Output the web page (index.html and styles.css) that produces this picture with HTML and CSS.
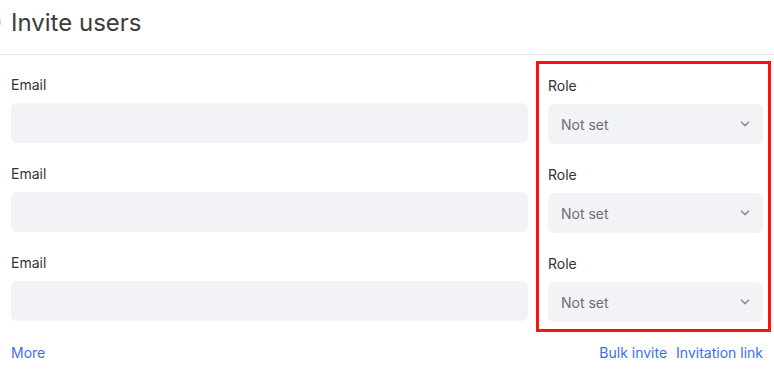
FILE: index.html
```html
<!DOCTYPE html>
<html lang="en">
<head>
    <meta charset="UTF-8">
    <meta name="viewport" content="width=device-width, initial-scale=1.0">
    <title>Invite users</title>
    <link rel="stylesheet" href="styles.css">
</head>
<body>
    <div class="header">
        <svg class="back-icon" width="16" height="16" viewBox="0 0 16 16">
            <circle cx="8" cy="8" r="6.5" fill="none" stroke="#d6d7dc" stroke-width="1.5"/>
        </svg>
        <h1>Invite users</h1>
    </div>
    <div class="invite-form">
        <div class="invite-row">
            <div class="field">
                <label>Email</label>
                <input type="text" class="text-input">
            </div>
            <div class="field role-field">
                <label>Role</label>
                <div class="select">
                    <span>Not set</span>
                    <svg width="10" height="6" viewBox="0 0 10 6"><path d="M1.5 1.2 L5 4.6 L8.5 1.2" fill="none" stroke="#8c909c" stroke-width="1.6" stroke-linecap="round" stroke-linejoin="round"/></svg>
                </div>
            </div>
        </div>
        <div class="invite-row">
            <div class="field">
                <label>Email</label>
                <input type="text" class="text-input">
            </div>
            <div class="field role-field">
                <label>Role</label>
                <div class="select">
                    <span>Not set</span>
                    <svg width="10" height="6" viewBox="0 0 10 6"><path d="M1.5 1.2 L5 4.6 L8.5 1.2" fill="none" stroke="#8c909c" stroke-width="1.6" stroke-linecap="round" stroke-linejoin="round"/></svg>
                </div>
            </div>
        </div>
        <div class="invite-row">
            <div class="field">
                <label>Email</label>
                <input type="text" class="text-input">
            </div>
            <div class="field role-field">
                <label>Role</label>
                <div class="select">
                    <span>Not set</span>
                    <svg width="10" height="6" viewBox="0 0 10 6"><path d="M1.5 1.2 L5 4.6 L8.5 1.2" fill="none" stroke="#8c909c" stroke-width="1.6" stroke-linecap="round" stroke-linejoin="round"/></svg>
                </div>
            </div>
        </div>
        <div class="links">
            <a href="#">More</a>
            <div class="links-right">
                <a href="#">Bulk invite</a>
                <a href="#">Invitation link</a>
            </div>
        </div>
        <div class="highlight"></div>
    </div>
</body>
</html>
```

FILE: styles.css
```css
body {
    margin: 0;
    font-family: Inter, 'Noto Sans', sans-serif;
    color: #333;
    background: #fff;
}
.header {
    display: flex;
    align-items: center;
    height: 55px;
    border-bottom: 1px solid #e6e6ee;
    padding-left: 11px;
    box-sizing: border-box;
}
.back-icon {
    margin-left: -25px;
    margin-right: 9px;
    margin-top: -11px;
}
.header h1 {
    margin: 0 0 10px 0;
    font-size: 24px;
    font-weight: 400;
    color: #3c3c3c;
}
.invite-form {
    position: relative;
    padding: 21px 11px 0 11px;
}
.invite-row {
    display: grid;
    grid-template-columns: 1fr 215px;
    column-gap: 20px;
    margin-bottom: 21px;
}
.invite-row:last-of-type {
    margin-bottom: 0;
}
.field label {
    display: block;
    font-size: 14px;
    line-height: 18px;
    margin-bottom: 9px;
    color: #333;
}
.role-field {
    padding-top: 1px;
}
.text-input {
    display: block;
    width: 100%;
    height: 40px;
    box-sizing: border-box;
    border: none;
    border-radius: 6px;
    background: #f2f3f7;
    outline: none;
}
.select {
    display: flex;
    align-items: center;
    justify-content: space-between;
    height: 40px;
    padding: 0 13px;
    border-radius: 6px;
    background: #f2f3f7;
    font-size: 14px;
    color: #6e6e6e;
}
.links {
    display: flex;
    justify-content: space-between;
    margin-top: 22px;
    font-size: 14px;
    line-height: 18px;
}
.links a {
    color: #3d6fe8;
    text-decoration: none;
}
.links-right {
    display: flex;
    gap: 9px;
}
.highlight {
    position: absolute;
    left: 536px;
    top: 6px;
    width: 235px;
    height: 271px;
    box-sizing: border-box;
    border: 3px solid #ff1010;
}
```
